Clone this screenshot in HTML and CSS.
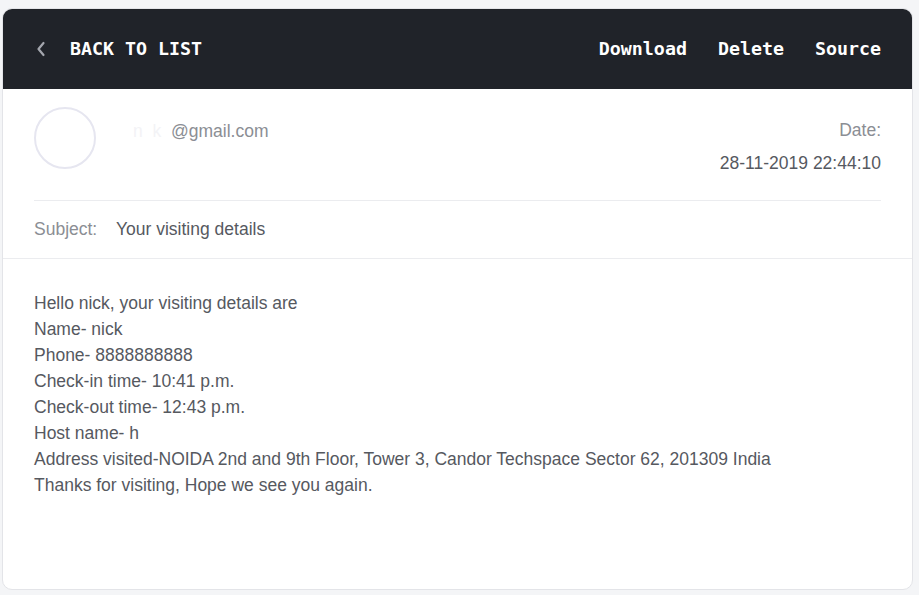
FILE: index.html
```html
<!DOCTYPE html>
<html>
<head>
<meta charset="utf-8">
<link rel="stylesheet" href="styles.css">
</head>
<body>
<div class="card">
  <header class="topbar">
    <a class="back">
      <svg class="chev" width="10" height="16" viewBox="0 0 10 16"><path d="M7.5 2 L2.5 8 L7.5 14" fill="none" stroke="currentColor" stroke-width="2.2" stroke-linecap="round" stroke-linejoin="round"/></svg>
      <span>BACK TO LIST</span>
    </a>
    <nav class="actions">
      <a>Download</a>
      <a>Delete</a>
      <a>Source</a>
    </nav>
  </header>
  <section class="meta">
    <div class="from-row">
      <div class="avatar"></div>
      <div class="sender"><span class="blur">n&nbsp;&nbsp;k</span>@gmail.com</div>
      <div class="date">
        <div class="date-label">Date:</div>
        <div class="date-value">28-11-2019 22:44:10</div>
      </div>
    </div>
    <div class="subject-row">
      <span class="subject-label">Subject:</span>
      <span class="subject-value">Your visiting details</span>
    </div>
  </section>
  <section class="message">
    <p>Hello nick, your visiting details are</p>
    <p>Name- nick</p>
    <p>Phone- 8888888888</p>
    <p>Check-in time- 10:41 p.m.</p>
    <p>Check-out time- 12:43 p.m.</p>
    <p>Host name- h</p>
    <p>Address visited-NOIDA 2nd and 9th Floor, Tower 3, Candor Techspace Sector 62, 201309 India</p>
    <p>Thanks for visiting, Hope we see you again.</p>
  </section>
</div>
</body>
</html>
```
FILE: styles.css
```css
* { box-sizing: border-box; }
html, body { margin: 0; padding: 0; }
body {
  background: #f4f5f7;
  font-family: "Liberation Sans", Arial, sans-serif;
  padding: 8px 6px 6px 2px;
  height: 595px;
}
.card {
  background: #fff;
  border: 1px solid #e3e4e8;
  border-radius: 10px;
  height: 582px;
  overflow: hidden;
  display: flex;
  flex-direction: column;
}
.topbar {
  background: #202329;
  height: 81px;
  display: flex;
  align-items: center;
  justify-content: space-between;
  padding: 0 32px 0 32px;
  font-family: "DejaVu Sans Mono", monospace;
  font-weight: bold;
  font-size: 18.3px;
  color: #fff;
  margin: -1px -1px 0 -1px;
}
.back {
  display: flex;
  align-items: center;
  gap: 24px;
}
.chev { color: #a3a6ad; margin-left: 2px; }
.actions { display: flex; gap: 31px; }
.meta {
  padding: 0 31px 0 31px;
  border-bottom: 1px solid #ebecef;
}
.from-row {
  display: flex;
  align-items: flex-start;
  padding-top: 18px;
  height: 112px;
  border-bottom: 1px solid #ebecef;
}
.avatar {
  width: 62px;
  height: 62px;
  border-radius: 50%;
  border: 2px solid #e6e6f0;
  flex: none;
}
.sender {
  margin-left: 37px;
  margin-top: 14px;
  font-size: 17.5px;
  color: #8b8e94;
  flex: 1;
}
.blur {
  display: inline-block;
  width: 38px;
  color: #f3f3f6;
}
.date { text-align: right; font-size: 17.5px; margin-top: 13px; }
.date-label { color: #8b8e94; }
.date-value { color: #56595f; margin-top: 12px; }
.subject-row {
  height: 57px;
  display: flex;
  align-items: center;
  font-size: 17.5px;
}
.subject-label { color: #8b8e94; width: 82px; }
.subject-value { color: #56595f; }
.message {
  padding: 31px 31px;
  font-size: 17.5px;
  line-height: 26px;
  color: #56595f;
}
.message p { margin: 0; }
```
